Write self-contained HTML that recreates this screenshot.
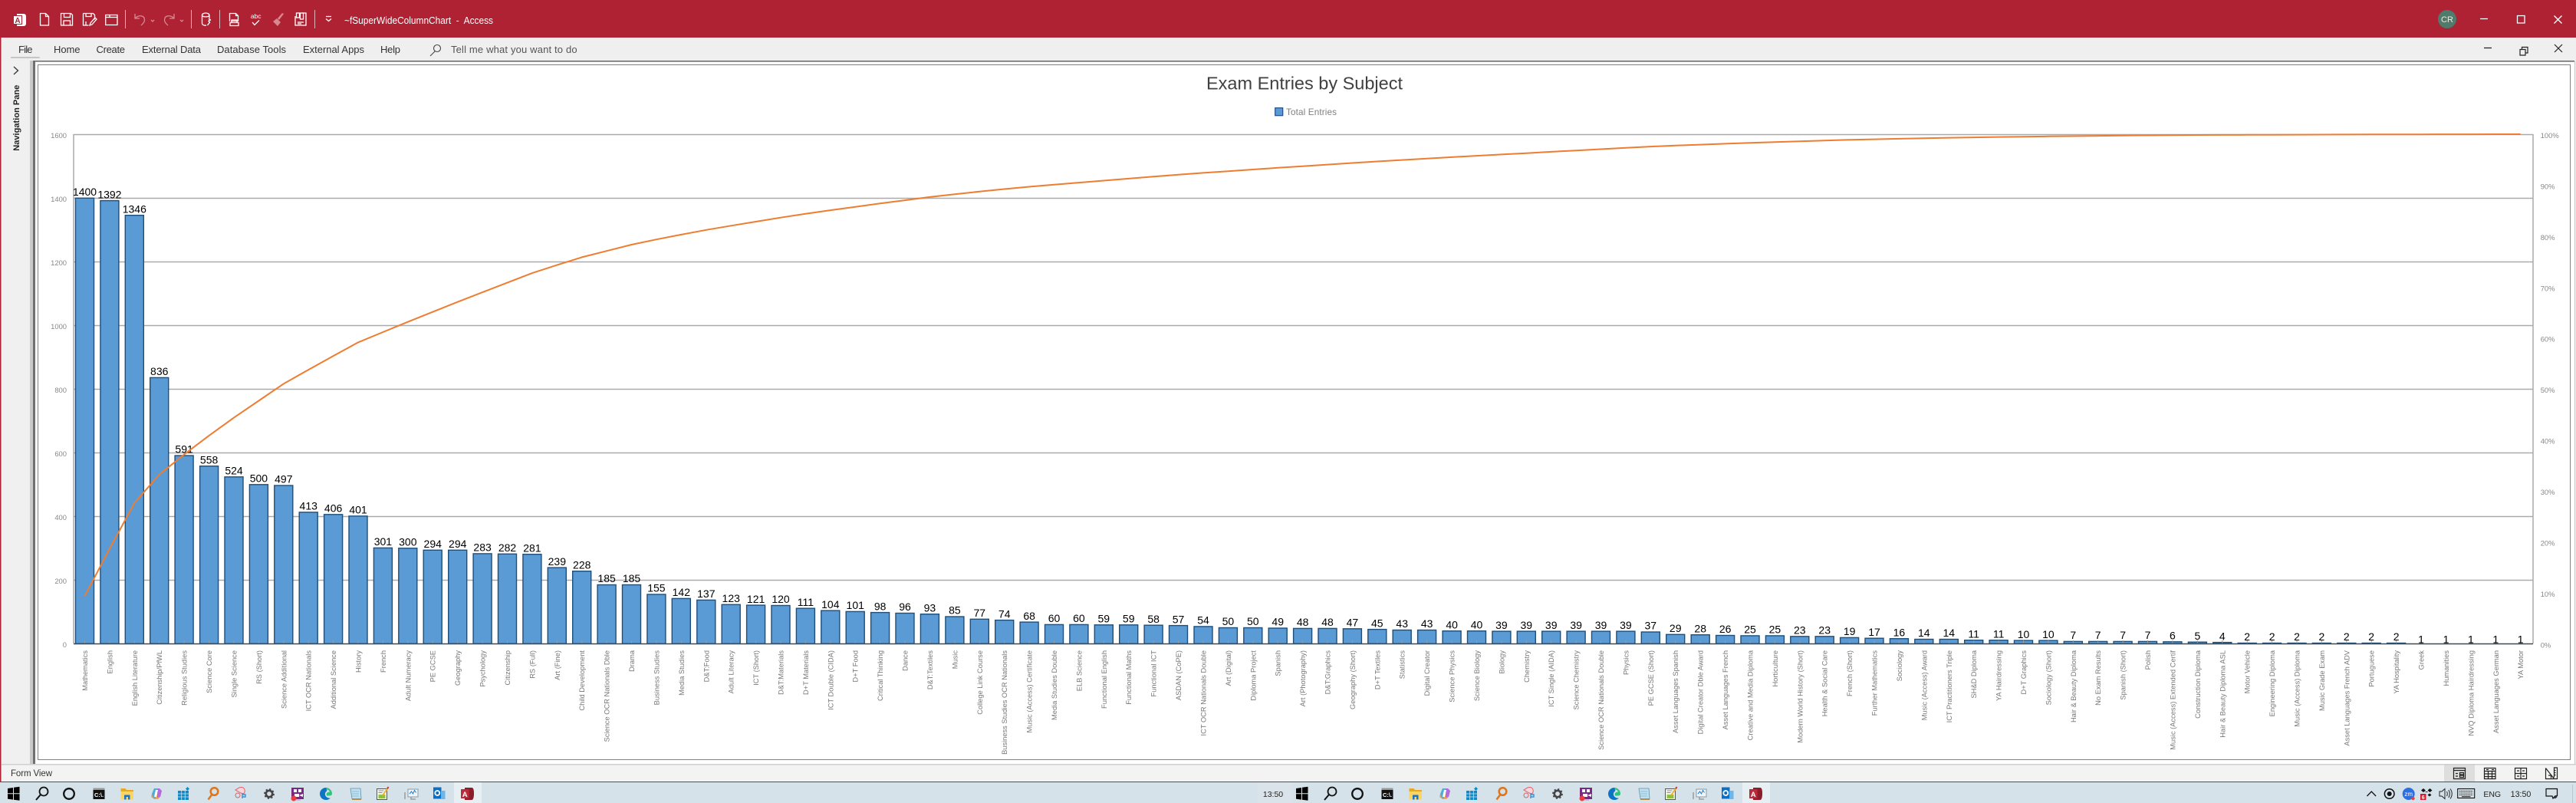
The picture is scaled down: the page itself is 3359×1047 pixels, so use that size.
<!DOCTYPE html>
<html lang="en"><head><meta charset="utf-8"><title>~fSuperWideColumnChart - Access</title>
<style>
html,body{margin:0;padding:0;background:#fff;width:3359px;height:1047px;overflow:hidden}
svg{display:block;font-family:"Liberation Sans",sans-serif}
.tab{font-size:13px;fill:#333}
.ax{font-size:9.4px;fill:#888}
.l{text-anchor:end}
.v{font-size:14px;fill:#000;text-anchor:middle}
.c{font-size:9.3px;fill:#777;text-anchor:end}
#bars rect{fill:#5b9bd5;stroke:#1f4e79;stroke-width:1.4}
#bars path{stroke:#999;stroke-width:1;fill:none}
.w{fill:none;stroke:#fff;stroke-width:1.3}
.d{fill:none;stroke:#d98892;stroke-width:1.3}
.k{fill:none;stroke:#222;stroke-width:1.2}
</style></head><body>
<svg xmlns="http://www.w3.org/2000/svg" width="3359" height="1047" viewBox="0 0 3359 1047">
<!-- window chrome -->
<rect width="3359" height="1047" fill="#f0f0f0"/>
<rect width="3359" height="49" fill="#ae2233"/>
<rect y="49" width="3359" height="30" fill="#efefef"/>
<rect x="0" y="49" width="1.5" height="971" fill="#ae2233"/>
<rect x="2" y="79" width="37" height="918" fill="#f0f0f0"/>
<rect x="39" y="79" width="4" height="918" fill="#c9c9c9"/>
<rect x="43" y="79" width="3" height="918" fill="#707070"/>
<rect x="46" y="79" width="3311" height="917" fill="#fff"/>
<rect x="43" y="79" width="3314" height="1.6" fill="#6e6e6e"/>
<rect x="3357" y="80" width="1" height="917" fill="#c8c8c8"/>
<rect x="49.5" y="84.5" width="3302" height="906" fill="none" stroke="#000" stroke-width="1" stroke-dasharray="1 1"/>
<rect x="2" y="996" width="3357" height="1.5" fill="#cfcfcf"/>
<rect x="2" y="997.5" width="3357" height="21.5" fill="#f3f3f3"/>
<rect y="1019" width="3359" height="1.2" fill="#a8283c"/>
<rect y="1020" width="3359" height="27" fill="#d5e2e9"/>
<rect x="1640" y="1020" width="45" height="27" fill="#d9e3e9"/>
<rect x="592" y="1020" width="36" height="27" fill="#e8eff3"/>
<rect x="2272" y="1020" width="36" height="27" fill="#e8eff3"/>

<!-- quick access toolbar -->
<g>
<path d="M22 18h9a3 3 0 0 1 3 3v10a3 3 0 0 1-3 3h-9z" fill="#fff"/>
<rect x="17.5" y="20.5" width="11" height="11" fill="#fff" stroke="#ae2233"/>
<text x="23" y="30" font-size="10" font-weight="bold" fill="#ae2233" text-anchor="middle">A</text>
<path class="w" d="M52.5 17.5h7l4 4v11.5h-11zM59.5 17.5v4h4"/>
<path class="w" d="M79.5 17.5h13l2 2v13.5h-15zM83.5 17.5v5h8v-5M83 33v-6h8.500v6"/>
<path class="w" d="M108.500 17.500h13l2 2v6M108.500 17.500v15.500h7M112 17.500v4h7v-4M112 33v-5"/><path class="w" d="M117 33l1-3 6-7 2 2-6 7z"/>
<path class="w" d="M137.700 19.500h15.300v13h-15.300zM137.700 22.500h15.300M143 19.500v3"/>
<rect x="163" y="13" width="1" height="24" fill="#e4b3b9"/>
<path class="d" d="M176 18v6h6M176.500 23.500c4-4 12-4 12 2.500 0 3-2 5-4.500 7"/>
<path class="d" d="M197 26l2 2 2-2"/>
<path class="d" d="M227 18v6h-6M226.500 23.500c-4-4-12-4-12 2.500 0 3 2 5 4.500 7"/>
<path class="d" d="M235 26l2 2 2-2"/>
<rect x="249" y="13" width="1" height="24" fill="#e4b3b9"/>
<path class="w" d="M263.500 20c0-4 9.500-4 9.500 0v4M263.500 20v10c0 3 4 3.500 5.500 3M263.500 20c0 2.500 9.500 2.500 9.500 0"/><path class="w" d="M274.500 25l-2.500 2.500 1.500 1.500-3 4M272 24.500l3 2"/>
<rect x="286" y="13" width="1" height="24" fill="#e4b3b9"/>
<path class="w" d="M299.500 28v-10.500h8l3 3v7.500M307.500 17.500v3h3M301 27.500h9M300 29.500h11v4h-11zM302 29v-3h7v3"/>
<text x="333.700" y="24" font-size="8.500" fill="#fff" text-anchor="middle">abc</text>
<path class="w" d="M329 29l3 3.500 6-6"/>
<path d="M370 18l-6 8-2-2 6-7zM356 28l5-4 5 5-4 5z" fill="#d98892"/>
<path class="w" d="M385 21v12h14v-16h-5M388 29h8M388 31h5"/><rect x="386.500" y="17" width="4" height="6" class="w"/><rect x="391.500" y="17" width="4" height="8" class="w"/>
<rect x="410" y="13" width="1" height="24" fill="#e4b3b9"/>
<path class="w" d="M425 21.500h7M425 24.500l3.500 3 3.500-3"/>
</g>
<text x="449" y="31" font-size="13" fill="#fff" textLength="194" lengthAdjust="spacingAndGlyphs" xml:space="preserve">~fSuperWideColumnChart  -  Access</text>

<!-- window controls -->
<circle cx="3191" cy="25" r="12" fill="#4f7a6e"/>
<text x="3191" y="29" font-size="11" fill="#f3ecd9" text-anchor="middle">CR</text>
<path class="w" d="M3234 24.500h10M3282.500 20.500h9.500v9.500h-9.500zM3330.500 20.500l10 10M3340.500 20.500l-10 10" stroke-width="1.400"/>
<path class="k" d="M3239 62.500h10M3286 64.500h7v7.500h-7zM3288.500 64.500v-3h7.500v7.500h-3M3331 58l10 10M3341 58l-10 10"/>

<!-- tabs -->
<text class="tab" x="24" y="69" textLength="18.500">File</text>
<text class="tab" x="70" y="69" textLength="34.500">Home</text>
<text class="tab" x="125.500" y="69" textLength="37.500">Create</text>
<text class="tab" x="185" y="69" textLength="77">External Data</text>
<text class="tab" x="283" y="69" textLength="90">Database Tools</text>
<text class="tab" x="395" y="69" textLength="80">External Apps</text>
<text class="tab" x="496" y="69" textLength="26">Help</text>
<rect x="14" y="74" width="37.700" height="2" fill="#c6c6c6"/>
<circle cx="570" cy="63" r="4.500" fill="none" stroke="#444" stroke-width="1.100"/><path d="M567 67l-6 6" stroke="#444" stroke-width="1.100" fill="none"/>
<text x="588" y="69" font-size="13" fill="#555" textLength="164.600">Tell me what you want to do</text>

<!-- nav pane -->
<path d="M18 87l5.500 5-5.500 5" fill="none" stroke="#333" stroke-width="1.300"/>
<text transform="translate(25,196.700)rotate(-90)" font-size="11" font-weight="bold" fill="#222" textLength="86">Navigation Pane</text>

<!-- chart title / legend -->
<text x="1573" y="116.700" font-size="23.500" fill="#404040" textLength="256">Exam Entries by Subject</text>
<rect x="1662.700" y="140.700" width="10" height="10" fill="#5b9bd5" stroke="#1f4e88" stroke-width="1.200"/>
<text x="1677" y="150" font-size="11.700" fill="#808080" textLength="66">Total Entries</text>

<!-- plot grid -->
<path d="M96 175.500H3303M96 258.500H3303M96 341.500H3303M96 424.500H3303M96 507.500H3303M96 590.500H3303M96 673.500H3303M96 756.500H3303M96 175V839M3303 175V839" stroke="#aaaaaa" stroke-width="1.500" fill="none"/>

<!-- axis labels -->
<g class="ax l">
<text class="ax l" x="87" y="180">1600</text><text class="ax l" x="87" y="263">1400</text><text class="ax l" x="87" y="346">1200</text><text class="ax l" x="87" y="429">1000</text><text class="ax l" x="87" y="512">800</text><text class="ax l" x="87" y="595">600</text><text class="ax l" x="87" y="678">400</text><text class="ax l" x="87" y="761">200</text><text class="ax l" x="87" y="844">0</text>
</g>
<g>
<text class="ax" x="3312.700" y="180">100%</text><text class="ax" x="3312.700" y="246.400">90%</text><text class="ax" x="3312.700" y="312.900">80%</text><text class="ax" x="3312.700" y="379.300">70%</text><text class="ax" x="3312.700" y="445.700">60%</text><text class="ax" x="3312.700" y="512.200">50%</text><text class="ax" x="3312.700" y="578.600">40%</text><text class="ax" x="3312.700" y="645">30%</text><text class="ax" x="3312.700" y="711.400">20%</text><text class="ax" x="3312.700" y="777.900">10%</text><text class="ax" x="3312.700" y="844.300">0%</text>
</g>

<!-- bars -->
<g id="bars">
<g transform="translate(110.5)"><rect x="-12" y="258.3" width="24" height="581"/><path d="M0 835v5"/><text class="v" y="255">1400</text><text class="c" transform="translate(3.5,848)rotate(-90)">Mathematics</text></g>
<g transform="translate(142.9)"><rect x="-12" y="261.6" width="24" height="577.7"/><path d="M0 835v5"/><text class="v" y="258.300">1392</text><text class="c" transform="translate(3.5,848)rotate(-90)">English</text></g>
<g transform="translate(175.3)"><rect x="-12" y="280.7" width="24" height="558.6"/><path d="M0 835v5"/><text class="v" y="277.400">1346</text><text class="c" transform="translate(3.5,848)rotate(-90)">English Literature</text></g>
<g transform="translate(207.7)"><rect x="-12" y="492.4" width="24" height="346.9"/><path d="M0 835v5"/><text class="v" y="489.100">836</text><text class="c" transform="translate(3.5,848)rotate(-90)">Citizenship/PfWL</text></g>
<g transform="translate(240.1)"><rect x="-12" y="594" width="24" height="245.3"/><path d="M0 835v5"/><text class="v" y="590.700">591</text><text class="c" transform="translate(3.5,848)rotate(-90)">Religious Studies</text></g>
<g transform="translate(272.6)"><rect x="-12" y="607.7" width="24" height="231.6"/><path d="M0 835v5"/><text class="v" y="604.400">558</text><text class="c" transform="translate(3.5,848)rotate(-90)">Science Core</text></g>
<g transform="translate(305)"><rect x="-12" y="621.8" width="24" height="217.5"/><path d="M0 835v5"/><text class="v" y="618.500">524</text><text class="c" transform="translate(3.5,848)rotate(-90)">Single Science</text></g>
<g transform="translate(337.4)"><rect x="-12" y="631.8" width="24" height="207.5"/><path d="M0 835v5"/><text class="v" y="628.500">500</text><text class="c" transform="translate(3.5,848)rotate(-90)">RS (Short)</text></g>
<g transform="translate(369.8)"><rect x="-12" y="633" width="24" height="206.3"/><path d="M0 835v5"/><text class="v" y="629.700">497</text><text class="c" transform="translate(3.5,848)rotate(-90)">Science Additional</text></g>
<g transform="translate(402.2)"><rect x="-12" y="667.9" width="24" height="171.4"/><path d="M0 835v5"/><text class="v" y="664.600">413</text><text class="c" transform="translate(3.5,848)rotate(-90)">ICT OCR Nationals</text></g>
<g transform="translate(434.6)"><rect x="-12" y="670.8" width="24" height="168.5"/><path d="M0 835v5"/><text class="v" y="667.500">406</text><text class="c" transform="translate(3.5,848)rotate(-90)">Additional Science</text></g>
<g transform="translate(467)"><rect x="-12" y="672.9" width="24" height="166.4"/><path d="M0 835v5"/><text class="v" y="669.600">401</text><text class="c" transform="translate(3.5,848)rotate(-90)">History</text></g>
<g transform="translate(499.4)"><rect x="-12" y="714.4" width="24" height="124.9"/><path d="M0 835v5"/><text class="v" y="711.100">301</text><text class="c" transform="translate(3.5,848)rotate(-90)">French</text></g>
<g transform="translate(531.8)"><rect x="-12" y="714.8" width="24" height="124.5"/><path d="M0 835v5"/><text class="v" y="711.500">300</text><text class="c" transform="translate(3.5,848)rotate(-90)">Adult Numeracy</text></g>
<g transform="translate(564.2)"><rect x="-12" y="717.3" width="24" height="122"/><path d="M0 835v5"/><text class="v" y="714">294</text><text class="c" transform="translate(3.5,848)rotate(-90)">PE GCSE</text></g>
<g transform="translate(596.7)"><rect x="-12" y="717.3" width="24" height="122"/><path d="M0 835v5"/><text class="v" y="714">294</text><text class="c" transform="translate(3.5,848)rotate(-90)">Geography</text></g>
<g transform="translate(629.1)"><rect x="-12" y="721.9" width="24" height="117.4"/><path d="M0 835v5"/><text class="v" y="718.600">283</text><text class="c" transform="translate(3.5,848)rotate(-90)">Psychology</text></g>
<g transform="translate(661.5)"><rect x="-12" y="722.3" width="24" height="117"/><path d="M0 835v5"/><text class="v" y="719">282</text><text class="c" transform="translate(3.5,848)rotate(-90)">Citizenship</text></g>
<g transform="translate(693.9)"><rect x="-12" y="722.7" width="24" height="116.6"/><path d="M0 835v5"/><text class="v" y="719.400">281</text><text class="c" transform="translate(3.5,848)rotate(-90)">RS (Full)</text></g>
<g transform="translate(726.3)"><rect x="-12" y="740.1" width="24" height="99.2"/><path d="M0 835v5"/><text class="v" y="736.800">239</text><text class="c" transform="translate(3.5,848)rotate(-90)">Art (Fine)</text></g>
<g transform="translate(758.7)"><rect x="-12" y="744.7" width="24" height="94.6"/><path d="M0 835v5"/><text class="v" y="741.400">228</text><text class="c" transform="translate(3.5,848)rotate(-90)">Child Development</text></g>
<g transform="translate(791.1)"><rect x="-12" y="762.5" width="24" height="76.8"/><path d="M0 835v5"/><text class="v" y="759.200">185</text><text class="c" transform="translate(3.5,848)rotate(-90)">Science OCR Nationals Dble</text></g>
<g transform="translate(823.5)"><rect x="-12" y="762.5" width="24" height="76.8"/><path d="M0 835v5"/><text class="v" y="759.200">185</text><text class="c" transform="translate(3.5,848)rotate(-90)">Drama</text></g>
<g transform="translate(855.9)"><rect x="-12" y="775" width="24" height="64.3"/><path d="M0 835v5"/><text class="v" y="771.700">155</text><text class="c" transform="translate(3.5,848)rotate(-90)">Business Studies</text></g>
<g transform="translate(888.3)"><rect x="-12" y="780.4" width="24" height="58.9"/><path d="M0 835v5"/><text class="v" y="777.100">142</text><text class="c" transform="translate(3.5,848)rotate(-90)">Media Studies</text></g>
<g transform="translate(920.8)"><rect x="-12" y="782.4" width="24" height="56.9"/><path d="M0 835v5"/><text class="v" y="779.100">137</text><text class="c" transform="translate(3.5,848)rotate(-90)">D&amp;T:Food</text></g>
<g transform="translate(953.2)"><rect x="-12" y="788.3" width="24" height="51"/><path d="M0 835v5"/><text class="v" y="785">123</text><text class="c" transform="translate(3.5,848)rotate(-90)">Adult Literacy</text></g>
<g transform="translate(985.6)"><rect x="-12" y="789.1" width="24" height="50.2"/><path d="M0 835v5"/><text class="v" y="785.800">121</text><text class="c" transform="translate(3.5,848)rotate(-90)">ICT (Short)</text></g>
<g transform="translate(1018)"><rect x="-12" y="789.5" width="24" height="49.8"/><path d="M0 835v5"/><text class="v" y="786.200">120</text><text class="c" transform="translate(3.5,848)rotate(-90)">D&amp;T:Materials</text></g>
<g transform="translate(1050.4)"><rect x="-12" y="793.2" width="24" height="46.1"/><path d="M0 835v5"/><text class="v" y="789.900">111</text><text class="c" transform="translate(3.5,848)rotate(-90)">D+T Materials</text></g>
<g transform="translate(1082.8)"><rect x="-12" y="796.1" width="24" height="43.2"/><path d="M0 835v5"/><text class="v" y="792.800">104</text><text class="c" transform="translate(3.5,848)rotate(-90)">ICT Double (CIDA)</text></g>
<g transform="translate(1115.2)"><rect x="-12" y="797.4" width="24" height="41.9"/><path d="M0 835v5"/><text class="v" y="794.100">101</text><text class="c" transform="translate(3.5,848)rotate(-90)">D+T Food</text></g>
<g transform="translate(1147.6)"><rect x="-12" y="798.6" width="24" height="40.7"/><path d="M0 835v5"/><text class="v" y="795.300">98</text><text class="c" transform="translate(3.5,848)rotate(-90)">Critical Thinking</text></g>
<g transform="translate(1180)"><rect x="-12" y="799.5" width="24" height="39.8"/><path d="M0 835v5"/><text class="v" y="796.200">96</text><text class="c" transform="translate(3.5,848)rotate(-90)">Dance</text></g>
<g transform="translate(1212.4)"><rect x="-12" y="800.7" width="24" height="38.6"/><path d="M0 835v5"/><text class="v" y="797.400">93</text><text class="c" transform="translate(3.5,848)rotate(-90)">D&amp;T:Textiles</text></g>
<g transform="translate(1244.9)"><rect x="-12" y="804" width="24" height="35.3"/><path d="M0 835v5"/><text class="v" y="800.700">85</text><text class="c" transform="translate(3.5,848)rotate(-90)">Music</text></g>
<g transform="translate(1277.3)"><rect x="-12" y="807.3" width="24" height="32"/><path d="M0 835v5"/><text class="v" y="804">77</text><text class="c" transform="translate(3.5,848)rotate(-90)">College Link Course</text></g>
<g transform="translate(1309.7)"><rect x="-12" y="808.6" width="24" height="30.7"/><path d="M0 835v5"/><text class="v" y="805.300">74</text><text class="c" transform="translate(3.5,848)rotate(-90)">Business Studies OCR Nationals</text></g>
<g transform="translate(1342.1)"><rect x="-12" y="811.1" width="24" height="28.2"/><path d="M0 835v5"/><text class="v" y="807.800">68</text><text class="c" transform="translate(3.5,848)rotate(-90)">Music (Access) Certificate</text></g>
<g transform="translate(1374.5)"><rect x="-12" y="814.4" width="24" height="24.9"/><path d="M0 835v5"/><text class="v" y="811.100">60</text><text class="c" transform="translate(3.5,848)rotate(-90)">Media Studies Double</text></g>
<g transform="translate(1406.9)"><rect x="-12" y="814.4" width="24" height="24.9"/><path d="M0 835v5"/><text class="v" y="811.100">60</text><text class="c" transform="translate(3.5,848)rotate(-90)">ELB Science</text></g>
<g transform="translate(1439.3)"><rect x="-12" y="814.8" width="24" height="24.5"/><path d="M0 835v5"/><text class="v" y="811.500">59</text><text class="c" transform="translate(3.5,848)rotate(-90)">Functional English</text></g>
<g transform="translate(1471.7)"><rect x="-12" y="814.8" width="24" height="24.5"/><path d="M0 835v5"/><text class="v" y="811.500">59</text><text class="c" transform="translate(3.5,848)rotate(-90)">Functional Maths</text></g>
<g transform="translate(1504.1)"><rect x="-12" y="815.2" width="24" height="24.1"/><path d="M0 835v5"/><text class="v" y="811.900">58</text><text class="c" transform="translate(3.5,848)rotate(-90)">Functional ICT</text></g>
<g transform="translate(1536.5)"><rect x="-12" y="815.6" width="24" height="23.7"/><path d="M0 835v5"/><text class="v" y="812.300">57</text><text class="c" transform="translate(3.5,848)rotate(-90)">ASDAN (CoPE)</text></g>
<g transform="translate(1569)"><rect x="-12" y="816.9" width="24" height="22.4"/><path d="M0 835v5"/><text class="v" y="813.600">54</text><text class="c" transform="translate(3.5,848)rotate(-90)">ICT OCR Nationals Double</text></g>
<g transform="translate(1601.4)"><rect x="-12" y="818.5" width="24" height="20.8"/><path d="M0 835v5"/><text class="v" y="815.200">50</text><text class="c" transform="translate(3.5,848)rotate(-90)">Art (Digital)</text></g>
<g transform="translate(1633.8)"><rect x="-12" y="818.5" width="24" height="20.8"/><path d="M0 835v5"/><text class="v" y="815.200">50</text><text class="c" transform="translate(3.5,848)rotate(-90)">Diploma Project</text></g>
<g transform="translate(1666.2)"><rect x="-12" y="819" width="24" height="20.3"/><path d="M0 835v5"/><text class="v" y="815.700">49</text><text class="c" transform="translate(3.5,848)rotate(-90)">Spanish</text></g>
<g transform="translate(1698.6)"><rect x="-12" y="819.4" width="24" height="19.9"/><path d="M0 835v5"/><text class="v" y="816.100">48</text><text class="c" transform="translate(3.5,848)rotate(-90)">Art (Photography)</text></g>
<g transform="translate(1731)"><rect x="-12" y="819.4" width="24" height="19.9"/><path d="M0 835v5"/><text class="v" y="816.100">48</text><text class="c" transform="translate(3.5,848)rotate(-90)">D&amp;T:Graphics</text></g>
<g transform="translate(1763.4)"><rect x="-12" y="819.8" width="24" height="19.5"/><path d="M0 835v5"/><text class="v" y="816.500">47</text><text class="c" transform="translate(3.5,848)rotate(-90)">Geography (Short)</text></g>
<g transform="translate(1795.8)"><rect x="-12" y="820.6" width="24" height="18.7"/><path d="M0 835v5"/><text class="v" y="817.300">45</text><text class="c" transform="translate(3.5,848)rotate(-90)">D+T Textiles</text></g>
<g transform="translate(1828.2)"><rect x="-12" y="821.5" width="24" height="17.8"/><path d="M0 835v5"/><text class="v" y="818.200">43</text><text class="c" transform="translate(3.5,848)rotate(-90)">Statistics</text></g>
<g transform="translate(1860.6)"><rect x="-12" y="821.5" width="24" height="17.8"/><path d="M0 835v5"/><text class="v" y="818.200">43</text><text class="c" transform="translate(3.5,848)rotate(-90)">Digital Creator</text></g>
<g transform="translate(1893.1)"><rect x="-12" y="822.7" width="24" height="16.6"/><path d="M0 835v5"/><text class="v" y="819.400">40</text><text class="c" transform="translate(3.5,848)rotate(-90)">Science Physics</text></g>
<g transform="translate(1925.5)"><rect x="-12" y="822.7" width="24" height="16.6"/><path d="M0 835v5"/><text class="v" y="819.400">40</text><text class="c" transform="translate(3.5,848)rotate(-90)">Science Biology</text></g>
<g transform="translate(1957.9)"><rect x="-12" y="823.1" width="24" height="16.2"/><path d="M0 835v5"/><text class="v" y="819.800">39</text><text class="c" transform="translate(3.5,848)rotate(-90)">Biology</text></g>
<g transform="translate(1990.3)"><rect x="-12" y="823.1" width="24" height="16.2"/><path d="M0 835v5"/><text class="v" y="819.800">39</text><text class="c" transform="translate(3.5,848)rotate(-90)">Chemistry</text></g>
<g transform="translate(2022.7)"><rect x="-12" y="823.1" width="24" height="16.2"/><path d="M0 835v5"/><text class="v" y="819.800">39</text><text class="c" transform="translate(3.5,848)rotate(-90)">ICT Single (AIDA)</text></g>
<g transform="translate(2055.1)"><rect x="-12" y="823.1" width="24" height="16.2"/><path d="M0 835v5"/><text class="v" y="819.800">39</text><text class="c" transform="translate(3.5,848)rotate(-90)">Science Chemistry</text></g>
<g transform="translate(2087.5)"><rect x="-12" y="823.1" width="24" height="16.2"/><path d="M0 835v5"/><text class="v" y="819.800">39</text><text class="c" transform="translate(3.5,848)rotate(-90)">Science OCR Nationals Double</text></g>
<g transform="translate(2119.9)"><rect x="-12" y="823.1" width="24" height="16.2"/><path d="M0 835v5"/><text class="v" y="819.800">39</text><text class="c" transform="translate(3.5,848)rotate(-90)">Physics</text></g>
<g transform="translate(2152.3)"><rect x="-12" y="824" width="24" height="15.3"/><path d="M0 835v5"/><text class="v" y="820.700">37</text><text class="c" transform="translate(3.5,848)rotate(-90)">PE GCSE (Short)</text></g>
<g transform="translate(2184.7)"><rect x="-12" y="827.3" width="24" height="12"/><path d="M0 835v5"/><text class="v" y="824">29</text><text class="c" transform="translate(3.5,848)rotate(-90)">Asset Languages Spanish</text></g>
<g transform="translate(2217.2)"><rect x="-12" y="827.7" width="24" height="11.6"/><path d="M0 835v5"/><text class="v" y="824.400">28</text><text class="c" transform="translate(3.5,848)rotate(-90)">Digital Creator Dble Award</text></g>
<g transform="translate(2249.6)"><rect x="-12" y="828.5" width="24" height="10.8"/><path d="M0 835v5"/><text class="v" y="825.200">26</text><text class="c" transform="translate(3.5,848)rotate(-90)">Asset Languages French</text></g>
<g transform="translate(2282)"><rect x="-12" y="828.9" width="24" height="10.4"/><path d="M0 835v5"/><text class="v" y="825.600">25</text><text class="c" transform="translate(3.5,848)rotate(-90)">Creative and Media Diploma</text></g>
<g transform="translate(2314.4)"><rect x="-12" y="828.9" width="24" height="10.4"/><path d="M0 835v5"/><text class="v" y="825.600">25</text><text class="c" transform="translate(3.5,848)rotate(-90)">Horticulture</text></g>
<g transform="translate(2346.8)"><rect x="-12" y="829.8" width="24" height="9.5"/><path d="M0 835v5"/><text class="v" y="826.500">23</text><text class="c" transform="translate(3.5,848)rotate(-90)">Modern World History (Short)</text></g>
<g transform="translate(2379.2)"><rect x="-12" y="829.8" width="24" height="9.5"/><path d="M0 835v5"/><text class="v" y="826.500">23</text><text class="c" transform="translate(3.5,848)rotate(-90)">Health &amp; Social Care</text></g>
<g transform="translate(2411.6)"><rect x="-12" y="831.4" width="24" height="7.9"/><path d="M0 835v5"/><text class="v" y="828.100">19</text><text class="c" transform="translate(3.5,848)rotate(-90)">French (Short)</text></g>
<g transform="translate(2444)"><rect x="-12" y="832.2" width="24" height="7.1"/><path d="M0 835v5"/><text class="v" y="828.900">17</text><text class="c" transform="translate(3.5,848)rotate(-90)">Further Mathematics</text></g>
<g transform="translate(2476.4)"><rect x="-12" y="832.7" width="24" height="6.6"/><path d="M0 835v5"/><text class="v" y="829.400">16</text><text class="c" transform="translate(3.5,848)rotate(-90)">Sociology</text></g>
<g transform="translate(2508.8)"><rect x="-12" y="833.5" width="24" height="5.8"/><path d="M0 835v5"/><text class="v" y="830.200">14</text><text class="c" transform="translate(3.5,848)rotate(-90)">Music (Access) Award</text></g>
<g transform="translate(2541.3)"><rect x="-12" y="833.5" width="24" height="5.8"/><path d="M0 835v5"/><text class="v" y="830.200">14</text><text class="c" transform="translate(3.5,848)rotate(-90)">ICT Practitioners Triple</text></g>
<g transform="translate(2573.7)"><rect x="-12" y="834.7" width="24" height="4.6"/><path d="M0 835v5"/><text class="v" y="831.400">11</text><text class="c" transform="translate(3.5,848)rotate(-90)">SH&amp;D Diploma</text></g>
<g transform="translate(2606.1)"><rect x="-12" y="834.7" width="24" height="4.6"/><path d="M0 835v5"/><text class="v" y="831.400">11</text><text class="c" transform="translate(3.5,848)rotate(-90)">YA Hairdressing</text></g>
<g transform="translate(2638.5)"><rect x="-12" y="835.1" width="24" height="4.2"/><path d="M0 835v5"/><text class="v" y="831.800">10</text><text class="c" transform="translate(3.5,848)rotate(-90)">D+T Graphics</text></g>
<g transform="translate(2670.9)"><rect x="-12" y="835.1" width="24" height="4.2"/><path d="M0 835v5"/><text class="v" y="831.800">10</text><text class="c" transform="translate(3.5,848)rotate(-90)">Sociology (Short)</text></g>
<g transform="translate(2703.3)"><rect x="-12" y="836.4" width="24" height="2.9"/><path d="M0 835v5"/><text class="v" y="833.100">7</text><text class="c" transform="translate(3.5,848)rotate(-90)">Hair &amp; Beauty Diploma</text></g>
<g transform="translate(2735.7)"><rect x="-12" y="836.4" width="24" height="2.9"/><path d="M0 835v5"/><text class="v" y="833.100">7</text><text class="c" transform="translate(3.5,848)rotate(-90)">No Exam Results</text></g>
<g transform="translate(2768.1)"><rect x="-12" y="836.4" width="24" height="2.9"/><path d="M0 835v5"/><text class="v" y="833.100">7</text><text class="c" transform="translate(3.5,848)rotate(-90)">Spanish (Short)</text></g>
<g transform="translate(2800.5)"><rect x="-12" y="836.4" width="24" height="2.9"/><path d="M0 835v5"/><text class="v" y="833.100">7</text><text class="c" transform="translate(3.5,848)rotate(-90)">Polish</text></g>
<g transform="translate(2832.9)"><rect x="-12" y="836.8" width="24" height="2.5"/><path d="M0 835v5"/><text class="v" y="833.500">6</text><text class="c" transform="translate(3.5,848)rotate(-90)">Music (Access) Extended Certif</text></g>
<g transform="translate(2865.4)"><rect x="-12" y="837.2" width="24" height="2.1"/><path d="M0 835v5"/><text class="v" y="833.900">5</text><text class="c" transform="translate(3.5,848)rotate(-90)">Construction Diploma</text></g>
<g transform="translate(2897.8)"><rect x="-12" y="837.6" width="24" height="1.7"/><path d="M0 835v5"/><text class="v" y="834.300">4</text><text class="c" transform="translate(3.5,848)rotate(-90)">Hair &amp; Beauty Diploma ASL</text></g>
<g transform="translate(2930.2)"><rect x="-12" y="838.5" width="24" height="0.8"/><path d="M0 835v5"/><text class="v" y="835.200">2</text><text class="c" transform="translate(3.5,848)rotate(-90)">Motor Vehicle</text></g>
<g transform="translate(2962.6)"><rect x="-12" y="838.5" width="24" height="0.8"/><path d="M0 835v5"/><text class="v" y="835.200">2</text><text class="c" transform="translate(3.5,848)rotate(-90)">Engineering Diploma</text></g>
<g transform="translate(2995)"><rect x="-12" y="838.5" width="24" height="0.8"/><path d="M0 835v5"/><text class="v" y="835.200">2</text><text class="c" transform="translate(3.5,848)rotate(-90)">Music (Access) Diploma</text></g>
<g transform="translate(3027.4)"><rect x="-12" y="838.5" width="24" height="0.8"/><path d="M0 835v5"/><text class="v" y="835.200">2</text><text class="c" transform="translate(3.5,848)rotate(-90)">Music Grade Exam</text></g>
<g transform="translate(3059.8)"><rect x="-12" y="838.5" width="24" height="0.8"/><path d="M0 835v5"/><text class="v" y="835.200">2</text><text class="c" transform="translate(3.5,848)rotate(-90)">Asset Languages French ADV</text></g>
<g transform="translate(3092.2)"><rect x="-12" y="838.5" width="24" height="0.8"/><path d="M0 835v5"/><text class="v" y="835.200">2</text><text class="c" transform="translate(3.5,848)rotate(-90)">Portuguese</text></g>
<g transform="translate(3124.6)"><rect x="-12" y="838.5" width="24" height="0.8"/><path d="M0 835v5"/><text class="v" y="835.200">2</text><text class="c" transform="translate(3.5,848)rotate(-90)">YA Hospitality</text></g>
<g transform="translate(3157)"><path d="M0 835v5"/><text class="v" y="838.500">1</text><text class="c" transform="translate(3.5,848)rotate(-90)">Greek</text></g>
<g transform="translate(3189.5)"><path d="M0 835v5"/><text class="v" y="838.500">1</text><text class="c" transform="translate(3.5,848)rotate(-90)">Humanities</text></g>
<g transform="translate(3221.9)"><path d="M0 835v5"/><text class="v" y="838.500">1</text><text class="c" transform="translate(3.5,848)rotate(-90)">NVQ Diploma Hairdressing</text></g>
<g transform="translate(3254.3)"><path d="M0 835v5"/><text class="v" y="838.500">1</text><text class="c" transform="translate(3.5,848)rotate(-90)">Asset Languages German</text></g>
<g transform="translate(3286.7)"><path d="M0 835v5"/><text class="v" y="838.500">1</text><text class="c" transform="translate(3.5,848)rotate(-90)">YA Motor</text></g>
</g>

<!-- x axis -->
<path d="M96 839.500H3303" stroke="#3f4a55" stroke-width="1.400" fill="none"/>

<!-- cumulative line -->
<polyline fill="none" stroke="#ed7d31" stroke-width="2" stroke-linejoin="round" points="110.5,777.2 142.9,715.5 175.3,655.9 207.7,618.8 240.1,592.6 272.6,567.9 305,544.6 337.4,522.5 369.8,500.4 402.2,482.1 434.6,464.1 467,446.4 499.4,433 531.8,419.7 564.2,406.7 596.7,393.7 629.1,381.1 661.5,368.6 693.9,356.1 726.3,345.6 758.7,335.4 791.1,327.2 823.5,319 855.9,312.2 888.3,305.9 920.8,299.8 953.2,294.3 985.6,289 1018,283.7 1050.4,278.8 1082.8,274.1 1115.2,269.7 1147.6,265.3 1180,261.1 1212.4,256.9 1244.9,253.2 1277.3,249.8 1309.7,246.5 1342.1,243.5 1374.5,240.8 1406.9,238.1 1439.3,235.5 1471.7,232.9 1504.1,230.3 1536.5,227.8 1569,225.4 1601.4,223.2 1633.8,221 1666.2,218.8 1698.6,216.7 1731,214.6 1763.4,212.5 1795.8,210.5 1828.2,208.6 1860.6,206.7 1893.1,204.9 1925.5,203.1 1957.9,201.4 1990.3,199.7 2022.7,197.9 2055.1,196.2 2087.5,194.5 2119.9,192.8 2152.3,191.1 2184.7,189.8 2217.2,188.6 2249.6,187.4 2282,186.3 2314.4,185.2 2346.8,184.2 2379.2,183.2 2411.6,182.3 2444,181.6 2476.4,180.9 2508.8,180.2 2541.3,179.6 2573.7,179.1 2606.1,178.6 2638.5,178.2 2670.9,177.8 2703.3,177.5 2735.7,177.1 2768.1,176.8 2800.5,176.5 2832.9,176.3 2865.4,176 2897.8,175.9 2930.2,175.8 2962.6,175.7 2995,175.6 3027.4,175.5 3059.8,175.4 3092.2,175.3 3124.6,175.2 3157,175.2 3189.5,175.1 3221.9,175.1 3254.3,175 3286.7,175"/>

<!-- status bar -->
<text x="14" y="1012" font-size="11.500" fill="#333" textLength="54">Form View</text>
<rect x="3187" y="997.500" width="40" height="21.500" fill="#dedede"/>
<g>
<path class="k" d="M3199.500 1001.500h15v14h-15zM3199.500 1004.500h15M3202 1008.500h3M3202 1012h3M3207.500 1007.500h5v2.500h-5zM3207.500 1011h5v2.500h-5z"/>
<path class="k" d="M3239.500 1001.500h14.500v14h-14.500zM3239.500 1005.500h14.500M3239.500 1009h14.500M3239.500 1012.500h14.500M3244.500 1005.500v10M3249.500 1005.500v10M3242 1003.500h3M3249 1003.500h3"/>
<path class="k" d="M3279.500 1001.500h15v14h-15zM3287 1001.500v14M3279.500 1008.500h15M3282 1005h3M3289 1005h3M3282 1012h3M3289 1012h3"/>
<path class="k" d="M3319.500 1001.500v14h15v-14.500h-4v12h-1M3319.500 1001.500l11 14M3323 1011h3.500v3.500M3330.500 1004.500h2M3330.500 1007.500h2M3330.500 1010.500h2"/>
</g>

<!-- taskbar icons -->
<g id="tb">
<path d="M10 1028l7-1v7.300h-7zM18 1026.800l7.500-1v8.500h-7.500zM10 1035.300h7v7.300l-7-1zM18 1035.300h7.500v8.500l-7.500-1z" fill="#000"/>
<circle cx="57" cy="1032" r="5.500" fill="none" stroke="#111" stroke-width="1.800"/><path d="M53 1036l-6 7" stroke="#111" stroke-width="2" fill="none"/>
<circle cx="90" cy="1035" r="6.800" fill="none" stroke="#111" stroke-width="2.300"/>
<rect x="121.500" y="1027.500" width="15" height="14.500" fill="#111"/><rect x="121.500" y="1027.500" width="15" height="2.500" fill="#999"/>
<text x="129" y="1039" font-size="7.500" font-weight="bold" fill="#fff" text-anchor="middle">C:\.</text>
<path d="M157.500 1028h6l1.500 2h9v3h-16.500z" fill="#e8a820"/><rect x="157.500" y="1032" width="16.500" height="10.500" fill="#fcd462"/><path d="M162 1042.500v-6h7.500v6h-2.500v-3.500h-2.500v3.500z" fill="#1973c6"/>
<path d="M198 1035l3-7h6l4 3-2 8-3 3h-5l-4-3z" fill="#f4a05a"/><path d="M198 1035l3-7h4l-3 14-3-3z" fill="#4bb0d6"/><path d="M205 1028h3l3 3-2 8-4 1z" fill="#b46be0"/><path d="M203 1030h3l-2 9h-3z" fill="#fff"/>
<rect x="232" y="1031" width="14" height="12" fill="#0f8ac8"/><path d="M232 1035h14M232 1039h14M236.700 1031v12M241.300 1031v12" stroke="#d5e2e9" stroke-width="0.800" fill="none"/><path d="M244.500 1026l2.500 2.500-2.500 2.500-2.500-2.500z" fill="#0f8ac8"/>
<circle cx="279.500" cy="1032" r="4.800" fill="none" stroke="#e0761b" stroke-width="2.600"/><path d="M276 1036.500l-4.500 6" stroke="#e0761b" stroke-width="2.600" fill="none"/>
<path d="M312 1027c6-2 9 3 6 8l-4-1-7-4z" fill="#fbd5d9" stroke="#d9616e" stroke-width="1"/><circle cx="310" cy="1037" r="3" fill="none" stroke="#d9616e"/><path d="M316 1034v7M316 1036h4v3h-4" stroke="#3d8fd0" stroke-width="1.400" fill="none"/>
<circle cx="351" cy="1035" r="4.200" fill="none" stroke="#444" stroke-width="2.600"/><circle cx="351" cy="1035" r="6" fill="none" stroke="#444" stroke-width="1.800" stroke-dasharray="2.200 2.500"/>
<rect x="380" y="1027" width="16" height="15" fill="#7a2a86"/><rect x="383" y="1029" width="4" height="4" fill="#fff"/><rect x="389" y="1029" width="4" height="4" fill="#fff"/><path d="M384 1035h6v4h-6zM390 1037l5-2v4z" fill="#fff"/><circle cx="383" cy="1041" r="3.500" fill="#f03a3a"/><rect x="386" y="1042" width="6" height="2" fill="#e8a9d8"/>
<path d="M425 1027a8 8 0 0 1 8 8c0 2-2 2.500-4 2.500h-3c-1.500-3 1-5 4-5-1-3-5-4-7.500-2.500z" fill="#32c27f"/><path d="M425 1027a8 8 0 0 0-8 8c0 4.500 3.500 8 8 8 2.500 0 4.500-1 6-2.500-3 .500-6-1-7-4-.500-2 .500-4 2.500-5.500z" fill="#0c74c4"/>
<path d="M457 1028h13l1 13.500h-12z" fill="#bfe0ef" stroke="#5e93ad" stroke-width="0.800"/><path d="M459 1032h9M459 1035h9M459 1038h9" stroke="#87b4c8" stroke-width="0.800" fill="none"/><rect x="459" y="1041.500" width="12" height="1.500" fill="#b48a4b"/>
<rect x="491.500" y="1028.500" width="13" height="14" fill="#f8f8f2" stroke="#555"/><rect x="493.500" y="1036" width="9" height="5" fill="#8ac23c"/><path d="M493.500 1031h7M493.500 1033.500h5" stroke="#888" fill="none"/><path d="M499 1037l7-10" stroke="#f0b13a" stroke-width="2" fill="none"/><path d="M505 1028.500l1.500-2.500" stroke="#c93535" stroke-width="2" fill="none"/>
<rect x="532" y="1029" width="13" height="10" fill="#f0f4f7" stroke="#8a9aa3"/><path d="M534 1035l2.500-3 2 3 2-4.500 2 3" stroke="#1a7fcf" fill="none"/><path d="M528 1033v9M536 1039v3h6" stroke="#9b9b9b" stroke-width="1.500" fill="none"/>
<rect x="565" y="1026.500" width="10.500" height="15" fill="#0b6fc4"/><rect x="575" y="1031" width="5.500" height="11" fill="#6db6ec"/><circle cx="570.300" cy="1034" r="3" fill="none" stroke="#fff" stroke-width="1.800"/>
<path d="M606 1027h9c2 0 3 2 3 7.500s-1 8.500-3 8.500h-9z" fill="#8d1c2b"/><rect x="601" y="1029" width="10.500" height="12" fill="#b92b3a"/>
<text x="606.200" y="1038.800" font-size="9.500" font-weight="bold" fill="#fff" text-anchor="middle">A</text>
</g>
<use href="#tb" x="1680" y="0"/>
<text x="1660" y="1039" font-size="10.500" fill="#222" text-anchor="middle">13:50</text>

<!-- tray -->
<path d="M3086.500 1038l5.800-6 5.800 6" fill="none" stroke="#111" stroke-width="1.300"/>
<circle cx="3115.700" cy="1035" r="6.300" fill="none" stroke="#111" stroke-width="1.500"/><circle cx="3115.700" cy="1035" r="3" fill="#111"/>
<circle cx="3140.700" cy="1035" r="8" fill="#2d6fe0"/><text x="3140.700" y="1038" font-size="8" fill="#fff" text-anchor="middle">zm</text><circle cx="3146.500" cy="1041" r="2.200" fill="#f03a3a"/>
<path d="M3160 1028l3 2.500-3 2.500-3-2.500zM3168.500 1028l3 2.500-3 2.500-3-2.500zM3168 1034.500l2.500 2-2.500 2-2.500-2zM3161 1033l3.500-1h1v1z" fill="#111"/><rect x="3156" y="1035" width="7.500" height="8" fill="#d91c2f"/><text x="3159.700" y="1042" font-size="7" font-weight="bold" fill="#fff" text-anchor="middle">6</text>
<path d="M3181 1032h3l4-3.500v13l-4-3.500h-3zM3190.500 1032c1 1.500 1 4.500 0 6M3192.800 1030c2 3 2 7 0 10M3195 1028.500c3 4 3 9 0 13" fill="none" stroke="#222" stroke-width="1"/>
<rect x="3204.700" y="1028.500" width="22" height="12" fill="none" stroke="#111" stroke-width="1.100"/><path d="M3207 1031.500h17.500M3207 1034h17.500M3207 1036.500h17.500" stroke="#111" stroke-width="1" stroke-dasharray="1.300 .8" fill="none"/><path d="M3210 1038.700h11.500" stroke="#111" fill="none"/>
<text x="3249.700" y="1039" font-size="10.500" fill="#222" text-anchor="middle">ENG</text>
<text x="3287" y="1039" font-size="10.700" fill="#222" text-anchor="middle">13:50</text>
<path d="M3320 1028.500h14.500v9l-3 .5-2.500 3-1-3h-8z" fill="none" stroke="#111" stroke-width="1.200"/><path d="M3330 1041l3-4 1.500 1.500c-.500 2-2.500 3-4.500 2.500z" fill="#333"/>
<rect x="3354" y="1023" width="1" height="24" fill="#b9c7cf"/>
</svg>
</body></html>
